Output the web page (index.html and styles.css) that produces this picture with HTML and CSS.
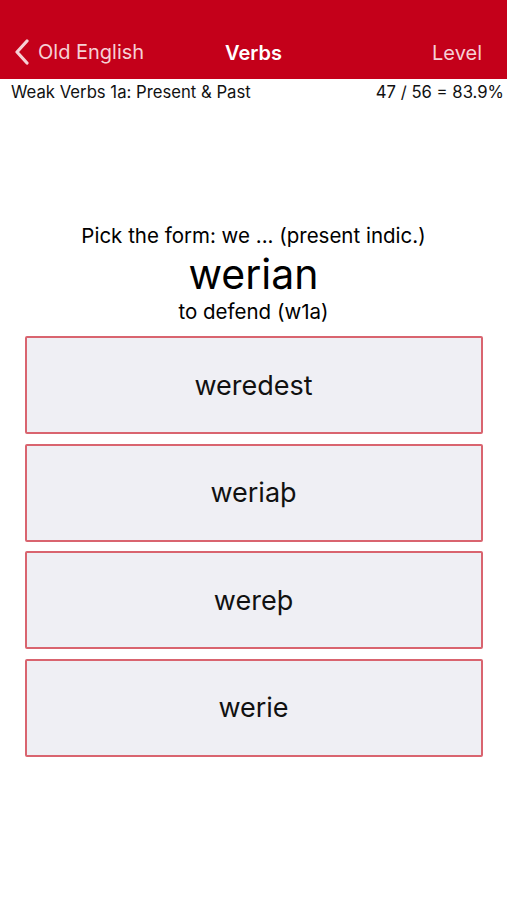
FILE: index.html
```html
<!DOCTYPE html>
<html>
<head>
<meta charset="utf-8">
<link rel="stylesheet" href="styles.css">
</head>
<body>
<header class="navbar">
  <div class="nav-left">
    <svg class="chevron" width="16" height="26" viewBox="0 0 16 26"><path d="M13 2 L3 13 L13 24" fill="none" stroke="#f6d0d5" stroke-width="3.2" stroke-linecap="round" stroke-linejoin="round"/></svg>
    <span>Old English</span>
  </div>
  <div class="nav-title">Verbs</div>
  <div class="nav-right">Level</div>
</header>
<div class="subbar">
  <span>Weak Verbs 1a: Present &amp; Past</span>
  <span>47 / 56 = 83.9%</span>
</div>
<main class="content">
  <div class="prompt">Pick the form: we ... (present indic.)</div>
  <div class="word">werian</div>
  <div class="gloss">to defend (w1a)</div>
  <div class="choices">
    <div class="choice">weredest</div>
    <div class="choice">weriaþ</div>
    <div class="choice">wereþ</div>
    <div class="choice">werie</div>
  </div>
</main>
</body>
</html>
```

FILE: styles.css
```css
html, body {
  margin: 0;
  padding: 0;
  background: #ffffff;
  font-family: Inter, "Noto Sans", sans-serif;
  color: #000;
}
.navbar {
  height: 79px;
  background: #c4001a;
  display: flex;
  align-items: flex-end;
  justify-content: space-between;
  padding: 0 25px 14px 14px;
  box-sizing: border-box;
  color: #f6d0d5;
  font-size: 20px;
  position: relative;
}
.nav-left {
  display: flex;
  align-items: center;
  gap: 8px;
}
.chevron {
  display: block;
}
.nav-title {
  position: absolute;
  left: 0;
  right: 0;
  bottom: 14px;
  text-align: center;
  color: #ffffff;
  font-weight: 600;
  pointer-events: none;
}
.subbar {
  display: flex;
  justify-content: space-between;
  padding: 3px 3px 0 11px;
  font-size: 16.7px;
  color: #111;
  line-height: 20px;
}
.content {
  display: flex;
  flex-direction: column;
  align-items: center;
  padding-top: 121px;
}
.prompt {
  font-size: 20.5px;
  line-height: 26px;
}
.word {
  font-size: 41px;
  line-height: 44px;
  margin-top: 3px;
}
.gloss {
  font-size: 20.5px;
  line-height: 26px;
  margin-top: 3px;
}
.choices {
  margin-top: 11px;
  width: 458px;
  display: flex;
  flex-direction: column;
  gap: 9.5px;
}
.choice {
  height: 98px;
  box-sizing: border-box;
  border: 2px solid #d9646f;
  border-radius: 2px;
  background: #efeff4;
  display: flex;
  align-items: center;
  justify-content: center;
  font-size: 27px;
  color: #111;
}
```
